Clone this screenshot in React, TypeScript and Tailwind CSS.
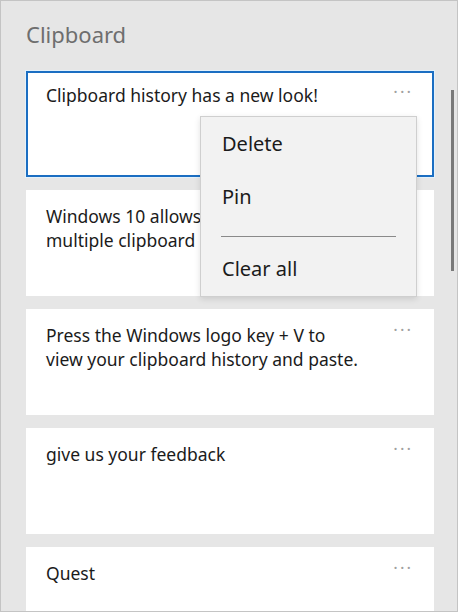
const clips = [
  "Clipboard history has a new look!",
  "Windows 10 allows you to save multiple clipboard items for later use.",
  "Press the Windows logo key + V to view your clipboard history and paste.",
  "give us your feedback",
  "Quest",
];

function ClipCard({ text, selected }: { text: string; selected?: boolean }) {
  return (
    <div
      className={
        selected
          ? "relative h-[106px] shrink-0 border-2 border-[#1b6ec2] bg-white pl-[18px] pr-[68px] pt-[10px] shadow-[0_0_0_1px_#e3f1fb]"
          : "relative h-[106px] shrink-0 bg-white pl-[20px] pr-[70px] pt-[14px]"
      }
    >
      <p className="text-[17.5px] leading-[24px] text-[#1b1b1b]">{text}</p>
      <span
        className={
          selected
            ? "absolute right-[19px] top-[10px] text-[17px] leading-none tracking-[2px] text-[#a0a0a0]"
            : "absolute right-[21px] top-[12px] text-[17px] leading-none tracking-[2px] text-[#a0a0a0]"
        }
      >
        ···
      </span>
    </div>
  );
}

export default function App() {
  return (
    <div
      className="relative h-[612px] w-[458px] overflow-hidden border border-[#c4c4c4] bg-[#e6e6e6]"
      style={{ fontFamily: '"Noto Sans", "Open Sans", sans-serif' }}
    >
      <div className="flex">
        <div className="flex w-[433px] flex-col pl-[25px]">
          <h1 className="pt-[18px] text-[22px] leading-[30px] text-[#6e6e6e]">Clipboard</h1>
          <div className="mt-[22px] flex flex-col gap-[13px]">
            {clips.map((clip, i) => (
              <ClipCard key={clip} text={clip} selected={i === 0} />
            ))}
          </div>
        </div>
        <div className="ml-[17px] mt-[89px] h-[181px] w-[3px] bg-[#7a7a7a]" />
      </div>

      <div className="absolute left-[199px] top-[115px] flex h-[181px] w-[217px] flex-col border border-[#cfcfcf] bg-[#f2f2f2] shadow-[0_2px_6px_rgba(0,0,0,0.12)]">
        <div className="px-[21px] pt-[12px] text-[20px] leading-[30px] text-[#1b1b1b]">Delete</div>
        <div className="px-[21px] pt-[23px] text-[20px] leading-[30px] text-[#1b1b1b]">Pin</div>
        <div className="mx-[20px] mt-[24px] h-px bg-[#8a8a8a]" />
        <div className="px-[21px] pt-[17px] text-[20px] leading-[30px] text-[#1b1b1b]">Clear all</div>
      </div>
    </div>
  );
}
